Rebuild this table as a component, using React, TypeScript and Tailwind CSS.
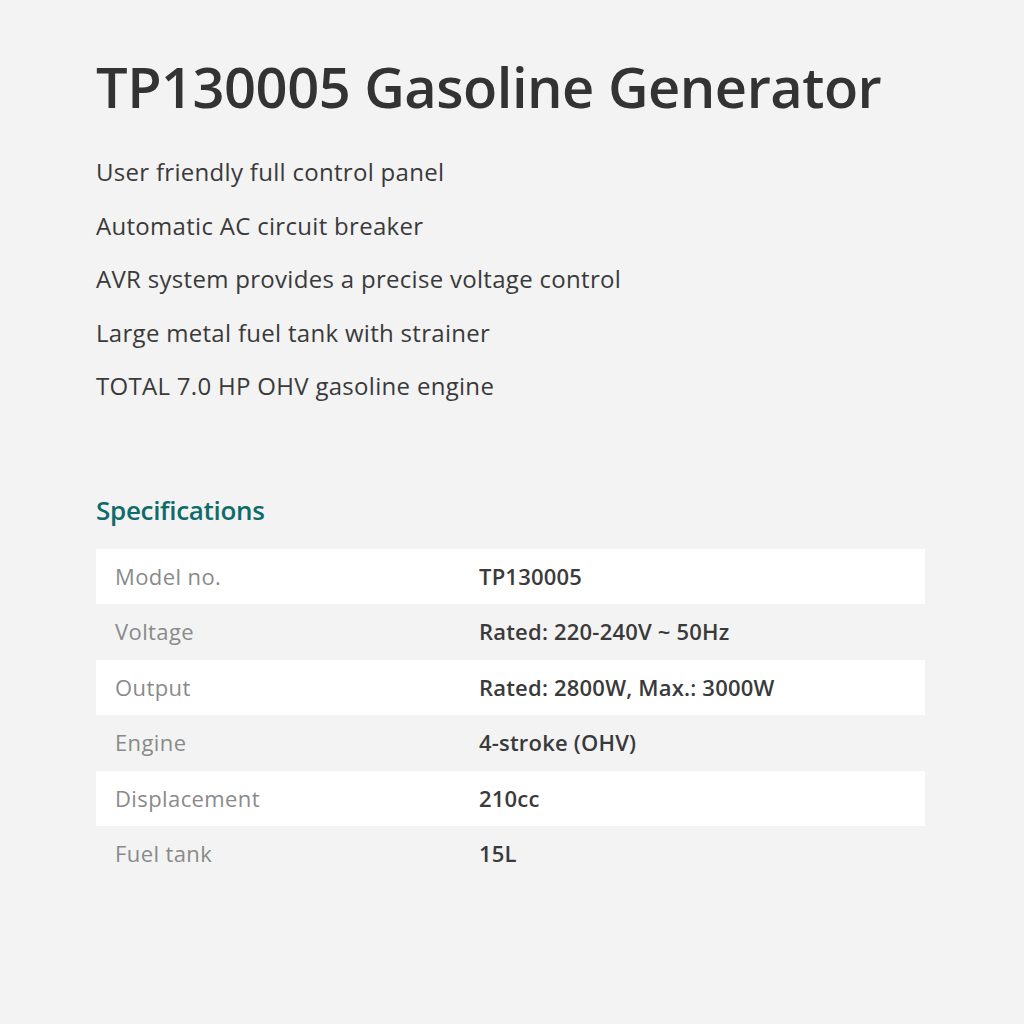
import React from "react";

const features = [
    "User friendly full control panel",
    "Automatic AC circuit breaker",
    "AVR system provides a precise voltage control",
    "Large metal fuel tank with strainer",
    "TOTAL 7.0 HP OHV gasoline engine",
];

const specs = [
    ["Model no.", "TP130005"],
    ["Voltage", "Rated: 220-240V ~ 50Hz"],
    ["Output", "Rated: 2800W, Max.: 3000W"],
    ["Engine", "4-stroke (OHV)"],
    ["Displacement", "210cc"],
    ["Fuel tank", "15L"],
];

function App() {
    return (
        <div className="min-h-[1024px] w-[1024px] bg-[#f3f3f3] text-[#333] font-['Open_Sans',sans-serif]">
            <div className="pl-[96px] pr-[99px] pt-[46px]">
                <h1 className="text-[56px] leading-[80px] font-semibold tracking-[-0.5px] text-[#333]">
                    TP130005 Gasoline Generator
                </h1>
                <ul className="mt-[19px] flex flex-col">
                    {features.map((f) => (
                        <li key={f} className="text-[24px] leading-[53.5px] tracking-[0.3px] text-[#3a3a3a]">{f}</li>
                    ))}
                </ul>
                <h2 className="mt-[77px] text-[26px] leading-[40px] font-semibold tracking-[-0.3px] text-[#0f6b6b]">
                    Specifications
                </h2>
                <div className="mt-[19px] flex flex-col">
                    {specs.map(([label, value], i) => (
                        <div key={label}
                             className={"flex h-[55.5px] items-center text-[22px] tracking-[0.2px] " + (i % 2 === 0 ? "bg-white" : "bg-[#f3f3f3]")}>
                            <div className="w-[383px] pl-[19px] tracking-[0.4px] text-[#8a8a8a]">{label}</div>
                            <div className="font-semibold text-[#3a3a3a]">{value}</div>
                        </div>
                    ))}
                </div>
            </div>
        </div>
    );
}

export default App;
